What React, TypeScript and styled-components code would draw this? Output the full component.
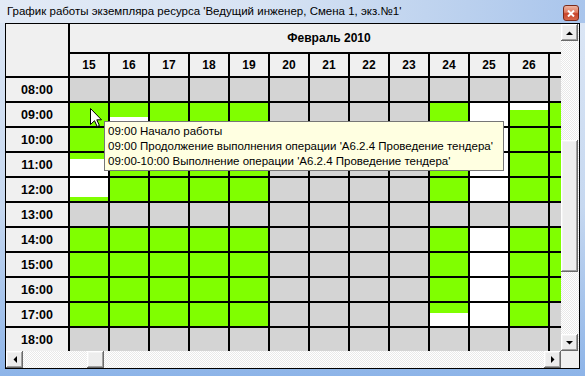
import React from 'react';
import styled, { createGlobalStyle } from 'styled-components';

const Global = createGlobalStyle`
  html, body { margin: 0; padding: 0; background: #fff; }
  body { width: 585px; height: 376px; overflow: hidden; font-family: "Liberation Sans", Arial, sans-serif; }
`;

const G = '#80ff00';
const W = '#ffffff';
const S = '#d4d4d4';

type Seg = [string, number];
type CellSpec = string | Seg[];

const FULL: CellSpec[] = [S, G, G, G, G, S, G, G, G, G, S];
const OFF: CellSpec[] = [S, S, S, S, S, S, S, S, S, S, S];

const days: { day: number; cells: CellSpec[]; clipped?: boolean }[] = [
  { day: 15, cells: [S, G, G, [[G, 6], [W, 17]], [[W, 19], [G, 4]], S, G, G, G, G, S] },
  { day: 16, cells: [S, [[G, 14], [W, 9]], G, G, G, S, G, G, G, G, S] },
  { day: 17, cells: FULL },
  { day: 18, cells: FULL },
  { day: 19, cells: FULL },
  { day: 20, cells: OFF },
  { day: 21, cells: OFF },
  { day: 22, cells: OFF },
  { day: 23, cells: OFF },
  { day: 24, cells: [S, G, G, G, G, S, G, G, G, [[G, 10], [W, 13]], S] },
  { day: 25, cells: [S, W, W, W, W, S, W, W, W, W, S] },
  { day: 26, cells: [S, [[W, 7], [G, 16]], G, G, G, S, G, G, G, G, S] },
  { day: 27, cells: [S, G, G, G, G, S, G, G, G, S, S], clipped: true },
];

const hours = ['08:00', '09:00', '10:00', '11:00', '12:00', '13:00', '14:00', '15:00', '16:00', '17:00', '18:00'];

const Window = styled.div`
  position: relative;
  width: 585px;
  height: 376px;
  box-sizing: border-box;
  display: flex;
  flex-direction: column;
  padding: 0 5px 7px 5px;
  background: linear-gradient(180deg, #dde7f5 0%, #c6d8f0 55%, #8db4e8 100%);
  overflow: hidden;
`;

const TitleBar = styled.div`
  height: 23px;
  margin: 0 -5px;
  padding: 0 6px 0 7px;
  display: flex;
  align-items: flex-start;
  background: linear-gradient(90deg, #e2eaf6 0%, #d7e3f3 45%, #bad0ee 80%, #a9c5ec 100%);
`;

const Title = styled.span`
  flex: 1;
  font: 11.5px/22px "Liberation Sans", Arial, sans-serif;
  color: #000;
  white-space: nowrap;
`;

const CloseButton = styled.div`
  margin-top: 5px;
  width: 16px;
  height: 16px;
  box-sizing: border-box;
  border: 1px solid #7a2a1a;
  border-radius: 3px;
  background: linear-gradient(180deg, #eeb4a2 0%, #de7a5f 45%, #c8432a 55%, #d6674a 100%);
  display: flex;
  align-items: center;
  justify-content: center;
`;

const Frame = styled.div`
  border: 1px solid #000;
  display: grid;
  grid-template-columns: 555px 18px;
  grid-template-rows: 327px 17px;
  background: #f0f0f0;
`;

const Viewport = styled.div`
  overflow: hidden;
  background: #fff;
`;

const Sheet = styled.div`
  display: grid;
  grid-template-columns: 64px repeat(13, 40px);
  grid-template-rows: 30px 24px;
  grid-auto-rows: 25px;
  width: max-content;
`;

const Lined = styled.div`
  box-sizing: border-box;
  border-right: 2px solid #000;
  border-bottom: 2px solid #000;
`;

const Corner = styled(Lined)`
  grid-row: span 2;
  background: #f0f0f0;
`;

const HeadCell = styled(Lined)<{ $span?: number }>`
  grid-column: span ${(p) => p.$span ?? 1};
  background: #f0f0f0;
  display: flex;
  align-items: center;
  justify-content: center;
  font: bold 12px "Liberation Sans", Arial, sans-serif;
  color: #000;
`;

const TimeLabel = styled(HeadCell)`
  font-size: 12.5px;
`;

const Cell = styled(Lined)<{ $bg: string }>`
  background: ${(p) => p.$bg};
  display: flex;
  flex-direction: column;
`;

const Segment = styled.div<{ $bg: string; $h: number; $last: boolean }>`
  background: ${(p) => p.$bg};
  flex: ${(p) => (p.$last ? '1 1 auto' : `0 0 ${p.$h}px`)};
`;

const track = `
  background-color: #fff;
  background-image: repeating-conic-gradient(#e9e9e9 0 25%, #ffffff 0 50%);
  background-size: 2px 2px;
`;

const VScroll = styled.div`
  display: flex;
  flex-direction: column;
  ${track}
`;

const HScroll = styled.div`
  display: flex;
  flex-direction: row;
  ${track}
`;

const CornerBox = styled.div`
  background: #f0f0f0;
`;

const ScrollButton = styled.div`
  flex: 0 0 17px;
  width: 17px;
  height: 17px;
  box-sizing: border-box;
  background: #ececec;
  box-shadow: inset -1px -1px #6a6a6a, inset 1px 1px #ffffff, inset -2px -2px #a0a0a0, inset 2px 2px #f4f4f4;
  display: flex;
  align-items: center;
  justify-content: center;
`;

const Spacer = styled.div<{ $size: number }>`
  flex: 0 0 ${(p) => p.$size}px;
`;

const Fill = styled.div`
  flex: 1 1 auto;
`;

const Thumb = styled.div<{ $len: number; $vertical: boolean }>`
  flex: 0 0 ${(p) => p.$len}px;
  ${(p) => (p.$vertical ? 'width: 17px;' : 'height: 17px;')}
  box-sizing: border-box;
  background: #ededed;
  box-shadow: inset -1px -1px #6a6a6a, inset 1px 1px #ffffff, inset -2px -2px #a0a0a0, inset 2px 2px #f4f4f4;
`;

const Tooltip = styled.div`
  position: absolute;
  left: 104px;
  top: 121px;
  width: 400px;
  height: 50px;
  box-sizing: border-box;
  border: 1px solid #767676;
  background: #ffffe1;
  padding: 2px 3px;
  font: 11.5px/15px "Liberation Sans", Arial, sans-serif;
  color: #000;
  white-space: nowrap;
  overflow: hidden;
`;

const Cursor = styled.svg`
  position: absolute;
  left: 90px;
  top: 108px;
  overflow: visible;
`;

const Arrow: React.FC<{ dir: 'up' | 'down' | 'left' | 'right' }> = ({ dir }) => {
  const pts = {
    up: '0,4 3.5,0.5 7,4',
    down: '0,0 7,0 3.5,3.5',
    left: '4,0 4,7 0.5,3.5',
    right: '0,0 0,7 3.5,3.5',
  }[dir];
  const vertical = dir === 'up' || dir === 'down';
  return (
    <svg width={vertical ? 7 : 4} height={vertical ? 4 : 7} viewBox={vertical ? '0 0 7 4' : '0 0 4 7'}>
      <polygon points={pts} fill="#000" />
    </svg>
  );
};

const renderCell = (spec: CellSpec, key: string) => {
  if (typeof spec === 'string') return <Cell key={key} $bg={spec} />;
  return (
    <Cell key={key} $bg={spec[spec.length - 1][0]}>
      {spec.map(([c, h], i) => (
        <Segment key={i} $bg={c} $h={h} $last={i === spec.length - 1} />
      ))}
    </Cell>
  );
};

export default function App() {
  return (
    <>
      <Global />
      <Window>
        <TitleBar>
          <Title>График работы экземпляра ресурса 'Ведущий инженер, Смена 1, экз.№1'</Title>
          <CloseButton>
            <svg width="8" height="7" viewBox="0 0 8 7">
              <path d="M1 0.5 L7 6.5 M7 0.5 L1 6.5" stroke="#fff" strokeWidth="2" />
            </svg>
          </CloseButton>
        </TitleBar>
        <Frame>
          <Viewport>
            <Sheet>
              <Corner />
              <HeadCell $span={13}>Февраль 2010</HeadCell>
              {days.map((d) => (
                <HeadCell key={d.day}>{d.clipped ? null : d.day}</HeadCell>
              ))}
              {hours.map((h, r) => (
                <React.Fragment key={h}>
                  <TimeLabel>{h}</TimeLabel>
                  {days.map((d) => renderCell(d.cells[r], `${h}-${d.day}`))}
                </React.Fragment>
              ))}
            </Sheet>
          </Viewport>
          <VScroll>
            <ScrollButton>
              <Arrow dir="up" />
            </ScrollButton>
            <Spacer $size={99} />
            <Thumb $len={132} $vertical />
            <Fill />
            <ScrollButton>
              <Arrow dir="down" />
            </ScrollButton>
          </VScroll>
          <HScroll>
            <ScrollButton>
              <Arrow dir="left" />
            </ScrollButton>
            <Spacer $size={64} />
            <Thumb $len={17} $vertical={false} />
            <Fill />
            <ScrollButton>
              <Arrow dir="right" />
            </ScrollButton>
          </HScroll>
          <CornerBox />
        </Frame>
        <Tooltip>
          <div>09:00 Начало работы</div>
          <div>09:00 Продолжение выполнения операции 'А6.2.4 Проведение тендера'</div>
          <div>09:00-10:00 Выполнение операции 'А6.2.4 Проведение тендера'</div>
        </Tooltip>
        <Cursor width="12" height="19" viewBox="0 0 12 19">
          <path d="M0.5 0.5 L0.5 16.5 L4.5 12.7 L7.2 18.5 L9.4 17.5 L6.8 11.8 L11.5 11.8 Z" fill="#fff" stroke="#000" strokeWidth="1" strokeLinejoin="miter" />
        </Cursor>
      </Window>
    </>
  );
}
